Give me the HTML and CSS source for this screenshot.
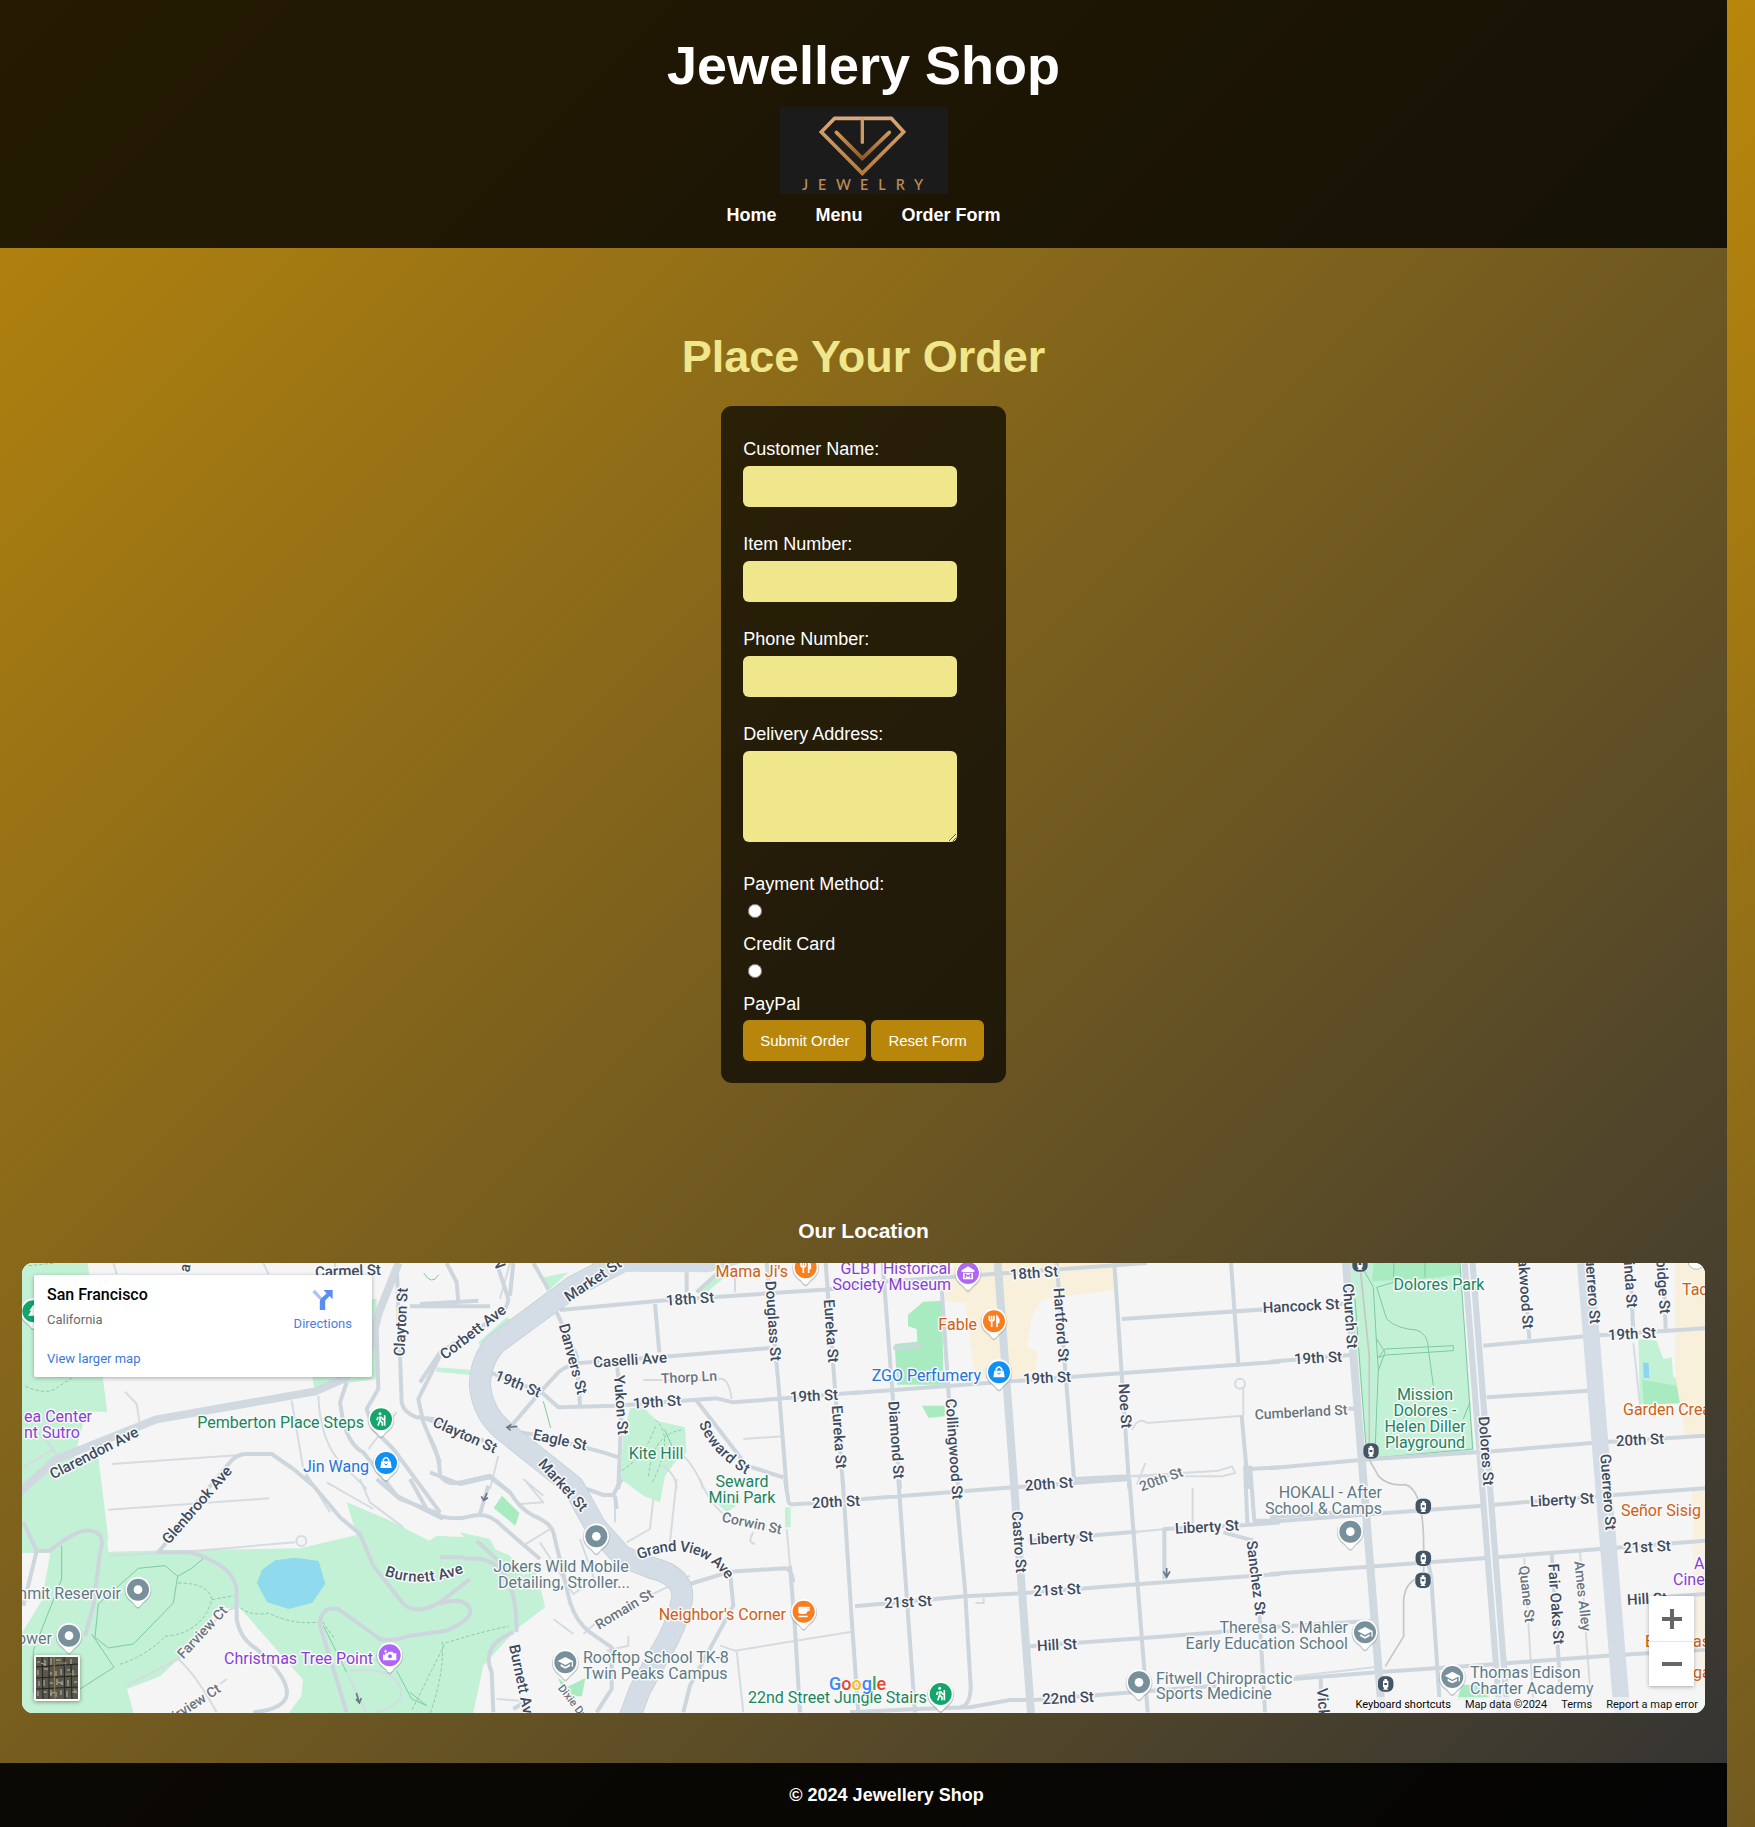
FILE: index.html
```html
<!DOCTYPE html>
<html lang="en">
<head>
<meta charset="utf-8">
<title>Jewellery Shop</title>
<link rel="stylesheet" href="styles.css">
</head>
<body>
<header class="site-header">
  <h1>Jewellery Shop</h1>
  <svg class="logo" viewBox="0 0 504 261" role="img" aria-label="Jewelry logo">
    <defs>
      <linearGradient id="gold" x1="0" y1="0" x2="0" y2="1"><stop offset="0" stop-color="#d9a878"/><stop offset="1" stop-color="#b87a35"/></linearGradient>
      <linearGradient id="gold2" x1="0" y1="0" x2="0" y2="1"><stop offset="0" stop-color="#cf9a58"/><stop offset="1" stop-color="#8a5a2c"/></linearGradient>
    </defs>
    <rect width="504" height="261" fill="#1b1b1b"/>
    <path d="M164 34H334L371 75L247 199L124 75Z" fill="none" stroke="url(#gold)" stroke-width="11"/>
    <path d="M169 76L247 154L328 76" fill="none" stroke="url(#gold2)" stroke-width="11" stroke-linecap="round"/>
    <path d="M242 34H252V108Q247 114 242 108Z" fill="#cf9a60"/>
    <g class="logo-word" fill="#b98a52"><text x="66" y="250">J</text><text x="114" y="250">E</text><text x="168" y="250">W</text><text x="240" y="250">E</text><text x="295" y="250">L</text><text x="347" y="250">R</text><text x="402" y="250">Y</text></g>
  </svg>
  <nav class="nav"><a href="#">Home</a><a href="#">Menu</a><a href="#">Order Form</a></nav>
</header>
<main>
  <section class="order">
    <h2>Place Your Order</h2>
    <form class="card">
      <div class="field"><label for="name">Customer Name:</label><input class="control" type="text" id="name"></div>
      <div class="field"><label for="item">Item Number:</label><input class="control" type="text" id="item"></div>
      <div class="field"><label for="phone">Phone Number:</label><input class="control" type="tel" id="phone"></div>
      <div class="field"><label for="address">Delivery Address:</label><textarea class="control area" id="address"></textarea></div>
      <fieldset class="payment">
        <legend>Payment Method:</legend>
        <input type="radio" name="payment" id="credit"><label for="credit">Credit Card</label>
        <input type="radio" name="payment" id="paypal"><label for="paypal">PayPal</label>
      </fieldset>
      <div class="actions"><button type="submit">Submit Order</button><button type="reset">Reset Form</button></div>
    </form>
  </section>
  <section class="location">
    <h3>Our Location</h3>
    <div class="map">
      <svg class="map-canvas" viewBox="0 0 1683 450" preserveAspectRatio="xMidYMid slice" role="img" aria-label="Map of San Francisco">
        <defs>
          <g id="pin"><path d="M0 54C-5 54 -8 48 -14 41C-22 34 -40 24 -40 -1A40 40 0 1 1 40 -1C40 24 22 34 14 41C8 48 5 54 0 54Z" fill="#8c969c" opacity=".5" transform="translate(0 3)"/><path d="M0 52C-5 52 -8 46 -14 39C-22 32 -38 22 -38 -1A38 38 0 1 1 38 -1C38 22 22 32 14 39C8 46 5 52 0 52Z" fill="#fff"/><circle r="33"/></g>
          <g id="pin-dot"><use href="#pin" fill="#78909c"/><circle r="13" fill="#fff"/></g>
          <g id="pin-hike"><use href="#pin" fill="#12a66a"/><g fill="none" stroke="#fff" stroke-width="5"><path d="M-3 -9V3L-9 19M-3 3L4 10V19M-9 -7L-12 3M0 -7L6 0L10 1M11 -12V19"/><circle cx="-3" cy="-17" r="2"/></g></g>
          <g id="pin-bag"><use href="#pin" fill="#1090f5"/><path d="M-14 -5H14L17 15H-17Z" fill="#fff"/><path d="M-8 -5V-10Q0 -23 8 -10V-5" fill="none" stroke="#fff" stroke-width="5"/><path d="M-5 2Q0 9 5 2" fill="none" stroke="#1090f5" stroke-width="3"/></g>
          <g id="pin-food"><use href="#pin" fill="#fa7d1e"/><path d="M-14 -17V-6Q-14 -1 -7 -1Q0 -1 0 -6V-17M-7 -17V17M9 17V-15Q16 -8 14 3H9" fill="none" stroke="#fff" stroke-width="5"/></g>
          <g id="pin-cup"><use href="#pin" fill="#fa7d1e"/><path d="M-16 -15H18V-2H12Q10 7 4 7H-8Q-16 7 -16 -2ZM-16 12H12V17H-16Z" fill="#fff"/><path d="M12 -10V-6H14V-10Z" fill="#fa7d1e"/></g>
          <g id="pin-museum"><use href="#pin" fill="#b066f5"/><path d="M-19 -8L0 -20L19 -8V-3H-19ZM-15 -1H15V19H-15Z" fill="#fff"/><path d="M-8 15V4L0 10L8 4V15" fill="none" stroke="#b066f5" stroke-width="4"/></g>
          <g id="pin-camera"><use href="#pin" fill="#b066f5"/><path d="M-18 -2H-13V-6H-6L-3 -11H8L11 -6H20V15H-20V-2Z" fill="#fff"/><circle cx="1" cy="3" r="6" fill="#b066f5"/><path d="M-12 -17V-8M-17 -12H-8" stroke="#fff" stroke-width="3"/></g>
          <g id="pin-school"><use href="#pin" fill="#78909c"/><path d="M-23 -4L0 -16L23 -4L0 8ZM-14 5L0 13L14 5V12L0 19L-14 12ZM19 -4H23V13H19Z" fill="#fff"/></g>
          <g id="transit"><circle r="26" fill="#dfe5e9"/><rect x="-23" y="-23" width="46" height="46" rx="17" fill="#435564"/><path d="M-4 -15H4V-10H8V9L4 12L8 17H-8L-4 12L-8 9V-10H-4ZM-4 -3V3H4V-3Z" fill="#fff" fill-rule="evenodd"/></g>
          <path id="grand" d="M615 292Q676 267 709 314"/>
          <path id="burnett" d="M362 307Q400 322 442 304"/>
          <path id="seward" d="M681 157Q692 188 728 208"/>
        </defs>
        <rect width="1683" height="450" fill="#f5f5f5"/>
        <g transform="scale(.333333)">
          <g class="park">
            <g transform="translate(-36 -42)"><path d="M36 42H233L292 488H228L190 640L262 600L295 870L36 1340ZM908 150H1100V390L985 405L915 430L908 390Z"/></g>
            <g transform="translate(-36 648)"><path d="M36 70L130 10L272 0L295 218L560 212L870 208L1040 168L1010 70L1130 120L1258 185L1280 170L1375 175L1500 230L1605 385L1520 450L1420 560L1390 702H36Z"/></g>
            <g transform="translate(1224 -42)"><path d="M340 85L415 70L350 130ZM145 280L230 205L250 215L150 290ZM18 355L120 362V378L20 368ZM800 130L840 85L885 85L820 138ZM600 478L640 475L680 515L765 535L770 610L735 640L705 680L690 760L570 690L580 560Z"/></g>
            <g transform="translate(1224 648)"><path d="M560 -40L690 -20V70L640 50L580 5ZM90 160L180 180L240 300L320 275L345 385L240 350ZM845 60L920 80L890 100ZM1065 85H1082V145H1065Z"/></g>
            <g transform="translate(3744 -42)"><path d="M240 42H570L612 605L290 628ZM1105 270L1160 275L1180 330L1205 325L1210 385L1305 380V450L1110 465Z"/></g>
          </g>
          <g class="lawn">
            <path d="M2704 116L2760 113L2764 320L2774 365L2625 365L2618 243L2686 236L2684 198L2658 190L2658 155L2676 140ZM2700 428L2768 428V460L2720 465Z"/>
            <path d="M4055 0H4312L4315 33L4240 45L4050 55ZM4860 350L5000 375V420L4865 425ZM4320 1265H4400V1305L4305 1310Z"/>
            <path d="M1415 735L1440 698L1492 750L1480 788ZM1608 1245L1640 1270L1690 1245L1680 1300H1630Z"/>
          </g>
          <path d="M2770 50L2800 0H3275V80L3060 110L3030 160L3015 250L3045 265L3040 345L2860 345L2840 200L2830 120L2768 115ZM4960 0H5049V510L4990 515L4960 340ZM5010 680L5049 675V820L5015 825Z" fill="#f9f0dc"/>
          <path d="M5010 820H5049V1270H5030Z" fill="#f9f0dc" opacity=".7"/>
          <path d="M820 884L890 894L910 962L870 1020L800 1038L735 1018L705 960L720 920L760 892Z" fill="#90daee"/>
          <path d="M4863 298L4880 300L4882 345L4865 345Z" fill="#8fd4f2"/>
          <path d="M654 1035L843 1250L838 1300L800 1350H335L315 1278L415 1240L478 1180L570 1060L610 1035Z" fill="#f5f5f5"/>
          <path d="M0 870L85 870L60 1010L0 1110Z" fill="#f5f5f5"/>

          <g class="path">
            <g transform="translate(-36 648)"><path d="M385 268L465 260L503 292L490 372L370 495L295 507L255 475L265 375ZM503 292L545 268L580 238M155 200V300L70 515V640L210 630L312 565L245 465M1010 580L940 440M1160 575L1205 660L1250 680L1200 640"/></g>
            <g transform="translate(3744 -42)"><path d="M270 42L310 115L320 290L325 360L315 610M320 115L370 100L372 42M465 42V85M320 115L350 210Q380 240 440 243Q475 255 475 300L490 410M255 150L290 620M570 42L608 600L300 628M325 325L345 300L550 290V305L350 318ZM320 270L345 310L325 365M600 460L580 510"/></g>
            <path d="M1564 415L1586 495M1928 500L1950 550M1205 30Q1230 70 1250 35"/>
          </g>
          <g class="trail">
            <path d="M20 8L100 0M10 370Q80 400 110 370L150 345M468 960Q560 960 570 1010Q540 1110 430 1120Q370 1180 290 1205M570 1010L635 998M655 1035Q690 1060 740 1050Q820 1090 900 1075L940 1130M1800 622Q1870 580 1900 490M1880 640Q1890 510 1985 500M1900 470Q1960 520 1890 660M1170 1340L1270 1140Q1400 1100 1460 1090M1225 1350Q1270 1220 1260 1130"/>
          </g>

          <g class="road minor">
            <g transform="translate(-36 -42)"><path d="M305 645L690 618M345 428L380 465L390 530M310 42L320 75M760 42L775 75M975 42V75M845 455L880 660L960 790M925 440Q930 580 1000 650L1070 720M1160 490L1075 600M40 655L130 600M100 560L145 625"/></g>
            <g transform="translate(-36 648)"><path d="M295 92L778 58M300 230L560 215L855 190M505 540Q560 590 620 700M1050 0L1080 70L1180 145M950 10L1090 90M350 620L505 540L640 400L675 385M630 615L650 600M1015 590L1070 700M1020 575Q1160 560 1175 640Q1170 680 1100 700"/><circle cx="874" cy="186" r="15"/></g>
            <g transform="translate(1224 -42)"><path d="M640 393H860Q895 375 905 450M940 570L1060 562M490 42V120M560 42V60M280 690L340 740M760 620Q800 660 820 720M700 650Q740 680 740 720M205 620L180 720M915 80V130M210 150L240 42"/></g>
            <g transform="translate(1224 648)"><path d="M740 0L720 190M590 190L660 150L670 60M555 60V130M270 75L340 70L290 10M810 0Q840 80 900 120M970 160Q950 190 975 195M1070 150L1080 260M430 465L370 420M460 465L500 430M660 350L780 290M595 470V500L530 515M920 515L940 700M870 500L915 515L1265 458M200 660L270 665M450 180L500 320M330 240L280 200L360 150M330 190L430 345L480 310"/></g>
            <path d="M3374 480L3664 458M3664 458V370M3330 500Q3350 460 3374 480M3320 640L3590 623L3630 610L3640 630L3600 640ZM3512 675V785M3345 665L3370 600M2860 1020H2885V1005M3434 798L3345 806M4834 240L4854 425"/>
            <circle cx="3654" cy="362" r="15"/>
            <path d="M4507 885L4534 1320M4674 865L4708 1330M4580 1310L4586 1345M3820 1240L4080 1210"/>
          </g>

          <g class="road">
            <g transform="translate(-36 -42)"><path d="M1160 42L1175 460Q1180 490 1220 505L1290 512M1200 172H1440M1100 240L1105 420L1070 480L1090 540L1150 600L1290 790M1290 320L1225 450L1240 520L1290 640M560 760L660 640Q680 615 710 615H785L850 660L910 710M1010 400L990 460L1000 520Q1020 590 1060 610L1160 740L1300 810"/></g>
            <g transform="translate(-36 648)"><path d="M440 225L520 130M440 220H540Q680 260 680 340V420Q690 480 740 510Q840 600 830 650Q820 690 730 700M885 -10L990 115L1050 165L1090 260L1180 375Q1220 410 1290 370L1380 300M1100 0L1170 60L1290 105M1200 0L1250 90M40 130L80 215L120 215Q200 150 240 155Q290 160 270 220L250 380L225 470M80 215L40 380M1010 700L930 440Q930 380 985 390L1110 480Q1140 490 1200 470L1310 455Q1390 420 1380 390Q1360 350 1290 375"/></g>
            <g transform="translate(1224 -42)"><path d="M50 42L80 100L85 160L-30 170M-30 165L145 155M200 42L235 150Q230 190 190 210L30 310L-30 400M250 42L240 140M310 42L355 120M390 183L690 155L1290 115M675 165L688 310M770 70V130M800 130L860 75M380 190L440 320L450 470M240 535L330 430L385 370Q420 340 480 340L720 322L1020 297M180 370L335 430L385 475L560 470L860 448L910 460L1290 430M560 340L575 470L565 720M1010 42L1045 400L1070 720M1187 42L1215 420L1240 720M800 455L850 520L950 650L1060 685M270 550L330 560L520 610L565 625M-10 510L200 590M0 565Q30 620 30 680Q50 710 90 700L180 680L240 730"/></g>
            <g transform="translate(1224 648)"><path d="M1065 0L1075 65Q1078 78 1090 76L1290 65M1238 0L1265 420L1285 700M1080 260L1095 450L1110 700M780 315L900 278L1065 268Q1085 270 1090 310M900 280L910 380L780 620L760 700M0 100Q60 130 130 110Q180 100 220 145L330 240M0 -20L90 15L180 -5L240 40Q270 90 310 110Q360 130 370 160L420 370Q440 430 480 460L545 505V630L500 700M150 105L175 20M470 30L520 48H550L575 0M555 50L560 90M100 240Q170 230 210 270Q260 320 260 460M250 460Q150 500 185 580L190 700M250 690L300 660M30 235H100M140 185L210 250"/></g>
            <g transform="translate(2484 -42)"><path d="M98 42L125 400L150 720M130 297L215 290M270 42L297 450L325 720M620 42L672 690L835 682M793 42L838 720M1143 42L1165 345M1175 500L1195 720M0 105L640 60L890 42M815 210L1290 178M0 433L820 372L1290 338M1195 660L1290 655"/></g>
            <g transform="translate(2484 648)"><path d="M145 0L195 700M320 60L345 330L362 620Q362 680 330 685M838 0L893 700M1185 -40L1192 132M1200 -40L1213 125H1290M1228 400L1245 700M0 63L490 25L840 0M535 185L860 158M943 300V150L1190 138L1290 130M1120 160L1210 185M15 382L345 352L525 342L870 315L1290 285M540 502L880 477L1230 450M0 700L200 690L360 685L480 663L560 662L1100 620"/></g>
            <g transform="translate(3744 -42)"><path d="M0 338L240 318M640 290L945 262L1305 238M650 445L955 425M650 608L965 582L1305 560M0 658L280 632L640 608M760 42L778 270M1080 42L1090 250M1180 42L1187 240M200 165H230M220 478L260 480"/></g>
            <g transform="translate(3744 648)"><path d="M0 128L640 80L1000 50L1305 28M0 115L280 95M0 285L640 238L990 210L1305 185M0 445L305 425M1070 363L1305 345M70 600L340 578L640 558L1010 530L1305 512M475 250L484 300L508 655M845 220L872 640M152 600L155 700"/></g>
          </g>

          <g class="edge"><path d="M1840 -25L1654 70L1424 240Q1374 290 1374 370Q1384 460 1454 510L1554 590L1654 670L1720 790L1800 880L1890 915Q1990 940 1980 1010Q1965 1090 1915 1170L1854 1280L1820 1370"/></g>
          <g class="major"><path d="M1840 -25L1654 70L1424 240Q1374 290 1374 370Q1384 460 1454 510L1554 590L1654 670L1720 790L1800 880L1890 915Q1990 940 1980 1010Q1965 1090 1915 1170L1854 1280L1820 1370"/></g>
          <path d="M1740 0H2160L2060 28L1800 26Z" fill="#d4dde5"/>
          <g class="road arterial">
            <path d="M-10 690L100 590L400 470L880 385L970 345L1040 270L1070 150L1130 0"/>
            <path d="M2927 0L3027 1350M3972 0L4080 1350"/>
            <path d="M4340 0L4445 1350" class="divided"/>
            <path d="M4690 0L4800 1350" class="wide"/>
          </g>
          <path d="M4340 0L4445 1350" stroke="#f3f6f8" stroke-width="5" fill="none"/>
          <path d="M4015 20L4042 280V590L4070 640Q4100 670 4150 665Q4205 680 4205 850V940Q4150 950 4145 1010V1120L4090 1210" fill="none" stroke="#c6c6c6" stroke-width="5"/>
          <path d="M1486 490L1455 493M1468 484L1455 493L1466 502M1395 690L1385 712M1378 700L1385 712L1398 704M3434 915V940M3424 925L3434 942L3444 925M1003 1290L1012 1320M1002 1308L1012 1320L1018 1305" stroke="#667888" stroke-width="5" fill="none"/>
        </g>

        <g class="label">
          <text transform="translate(326 8) rotate(-2)">Carmel St</text>
          <text transform="translate(163 5) rotate(-80)">a</text>
          <text transform="translate(477 0) rotate(70)">N</text>
          <text transform="translate(379 59) rotate(-87)">Clayton St</text>
          <text transform="translate(72 190) rotate(-27)">Clarendon Ave</text>
          <text transform="translate(175 242) rotate(-49)">Glenbrook Ave</text>
          <text><textPath href="#burnett" startOffset="50%">Burnett Ave</textPath></text>
          <text transform="translate(571 17) rotate(-34)">Market St</text>
          <text transform="translate(451 69) rotate(-38)">Corbett Ave</text>
          <text transform="translate(551 96) rotate(75)">Danvers St</text>
          <text transform="translate(608 97) rotate(-4)">Caselli Ave</text>
          <text transform="translate(496 121) rotate(22)">19th St</text>
          <text transform="translate(635 139) rotate(-4)">19th St</text>
          <text transform="translate(792 133) rotate(-3)">19th St</text>
          <text transform="translate(668 36) rotate(-4)">18th St</text>
          <text transform="translate(751 58) rotate(86)">Douglass St</text>
          <text transform="translate(809 68) rotate(86)">Eureka St</text>
          <text transform="translate(817 174) rotate(86)">Eureka St</text>
          <text transform="translate(599 142) rotate(86)">Yukon St</text>
          <text><textPath href="#seward" startOffset="50%">Seward St</textPath></text>
          <text transform="translate(538 177) rotate(12)">Eagle St</text>
          <text transform="translate(443 172) rotate(24)">Clayton St</text>
          <text transform="translate(541 222) rotate(48)">Market St</text>
          <text><textPath href="#grand" startOffset="50%">Grand View Ave</textPath></text>
          <text transform="translate(814 239) rotate(-3)">20th St</text>
          <text transform="translate(500 420) rotate(78)">Burnett Ave</text>
          <text transform="translate(1012 10) rotate(-4)">18th St</text>
          <text transform="translate(1039 62) rotate(86)">Hartford St</text>
          <text transform="translate(1025 115) rotate(-3)">19th St</text>
          <text transform="translate(1103 143) rotate(86)">Noe St</text>
          <text transform="translate(874 177) rotate(86)">Diamond St</text>
          <text transform="translate(932 186) rotate(86)">Collingwood St</text>
          <text transform="translate(1027 221) rotate(-4)">20th St</text>
          <text transform="translate(1279 43) rotate(-3)">Hancock St</text>
          <text transform="translate(1328 53) rotate(86)">Church St</text>
          <text transform="translate(1296 95) rotate(-3)">19th St</text>
          <text transform="translate(1506 66) rotate(86)" class="end">Oakwood St</text>
          <text transform="translate(1573 61) rotate(86)" class="end">Guerrero St</text>
          <text transform="translate(1610 45) rotate(86)" class="end">Linda St</text>
          <text transform="translate(1643 51) rotate(86)" class="end">Lapidge St</text>
          <text transform="translate(1610 71) rotate(-3)">19th St</text>
          <text transform="translate(1618 177) rotate(-3)">20th St</text>
          <text transform="translate(1464 188) rotate(86)">Dolores St</text>
          <text transform="translate(1586 229) rotate(86)">Guerrero St</text>
          <text transform="translate(1534 341) rotate(86)">Fair Oaks St</text>
          <text transform="translate(1540 237) rotate(-3)">Liberty St</text>
          <text transform="translate(1625 284) rotate(-3)">21st St</text>
          <text transform="translate(1625 336) rotate(-3)">Hill St</text>
          <text transform="translate(1300 425) rotate(86)" class="start">Vicksburg St</text>
          <text transform="translate(997 279) rotate(86)">Castro St</text>
          <text transform="translate(1039 275) rotate(-3)">Liberty St</text>
          <text transform="translate(1185 264) rotate(-3)">Liberty St</text>
          <text transform="translate(886 339) rotate(-3)">21st St</text>
          <text transform="translate(1035 327) rotate(-3)">21st St</text>
          <text transform="translate(1035 382) rotate(-3)">Hill St</text>
          <text transform="translate(1046 435) rotate(-3)">22nd St</text>
          <text transform="translate(1234 315) rotate(83)">Sanchez St</text>
          <g class="lane">
            <text transform="translate(180 369) rotate(-47)">Farview Ct</text>
            <text transform="translate(197 424) rotate(-33)" class="end">Fairview Ct</text>
            <text transform="translate(667 114) rotate(-3)">Thorp Ln</text>
            <text transform="translate(730 260) rotate(12)">Corwin St</text>
            <text transform="translate(602 346) rotate(-31)">Romain St</text>
            <text transform="translate(550 438) rotate(52)" class="tiny">Dixie Dr</text>
            <text transform="translate(1139 216) rotate(-20)">20th St</text>
            <text transform="translate(1279 149) rotate(-3)">Cumberland St</text>
            <text transform="translate(1505 331) rotate(84)">Quane St</text>
            <text transform="translate(1561 333) rotate(84)">Ames Alley</text>
          </g>
        </g>
        <g class="poi">
          <g fill="#8a3fd4"><text x="2" y="153">ea Center</text><text x="2" y="169">nt Sutro</text><text class="end" x="929" y="5">GLBT Historical</text><text class="end" x="929" y="21">Society Museum</text><text class="end" x="351" y="395">Christmas Tree Point</text><text x="1672" y="300">A</text><text x="1651" y="316">Cine</text></g>
          <g fill="#1b855c"><text class="end" x="342" y="159">Pemberton Place Steps</text><text class="mid" x="634" y="190">Kite Hill</text><text class="mid" x="720" y="218">Seward</text><text class="mid" x="720" y="234">Mini Park</text><text x="726" y="434">22nd Street Jungle Stairs</text><text class="mid" x="1417" y="21">Dolores Park</text><text class="mid" x="1403" y="131">Mission</text><text class="mid" x="1403" y="147">Dolores -</text><text class="mid" x="1403" y="163">Helen Diller</text><text class="mid" x="1403" y="179">Playground</text></g>
          <g fill="#2673d9"><text class="end" x="347" y="203">Jin Wang</text><text class="end" x="959" y="112">ZGO Perfumery</text></g>
          <g fill="#d0600f"><text class="end" x="766" y="8">Mama Ji's</text><text class="end" x="955" y="61">Fable</text><text class="end" x="764" y="351">Neighbor's Corner</text><text x="1660" y="26">Taco</text><text x="1601" y="146">Garden Crea</text><text x="1599" y="247">Señor Sisig</text><text x="1623" y="378">B</text><text x="1671" y="378">as</text><text x="1671" y="409">ga</text></g>
          <g fill="#5f7a84"><text class="end" x="99" y="330">Summit Reservoir</text><text class="end" x="30" y="375">Tower</text><text class="mid" x="539" y="303">Jokers Wild Mobile</text><text class="mid" x="542" y="319">Detailing, Stroller...</text><text x="561" y="394">Rooftop School TK-8</text><text x="561" y="410">Twin Peaks Campus</text><text x="1134" y="415">Fitwell Chiropractic</text><text x="1134" y="430">Sports Medicine</text><text class="end" x="1326" y="364">Theresa S. Mahler</text><text class="end" x="1326" y="380">Early Education School</text><text class="end" x="1360" y="229">HOKALI - After</text><text class="end" x="1360" y="245">School &amp; Camps</text><text x="1448" y="409">Thomas Edison</text><text x="1448" y="425">Charter Academy</text></g>
          <text class="google" x="807" y="420"><tspan fill="#4285f4">G</tspan><tspan fill="#ea4335">o</tspan><tspan fill="#fbbc05">o</tspan><tspan fill="#4285f4">g</tspan><tspan fill="#34a853">l</tspan><tspan fill="#ea4335">e</tspan></text>
        </g>
        <g transform="scale(.333333)">
          <use href="#pin" x="34" y="145" fill="#12a66a"/><path d="M34 125L46 143H40L50 158H18L28 143H22Z" fill="#fff"/>
          <use href="#pin-hike" x="1077" y="469"/><use href="#pin-hike" x="2756" y="1293"/>
          <use href="#pin-bag" x="1092" y="600"/><use href="#pin-bag" x="2931" y="328"/>
          <use href="#pin-food" x="2351" y="13"/><use href="#pin-food" x="2916" y="175"/>
          <use href="#pin-cup" x="2345" y="1046"/><use href="#pin-museum" x="2838" y="30"/>
          <use href="#pin-camera" x="1103" y="1177"/>
          <use href="#pin-school" x="1630" y="1198"/><use href="#pin-school" x="4029" y="1108"/><use href="#pin-school" x="4291" y="1242"/>
          <use href="#pin-dot" x="348" y="980"/><use href="#pin-dot" x="141" y="1118"/><use href="#pin-dot" x="1723" y="820"/><use href="#pin-dot" x="3351" y="1258"/><use href="#pin-dot" x="3985" y="806"/>
          <use href="#transit" x="4014" y="3"/><use href="#transit" x="4047" y="564"/><use href="#transit" x="4204" y="730"/><use href="#transit" x="4204" y="886"/><use href="#transit" x="4203" y="952"/><use href="#transit" x="4091" y="1263"/>
          <circle cx="5023" cy="-6" r="25" fill="#fff" stroke="#bbb" stroke-width="3"/>
        </g>
      </svg>
      <div class="place">
        <div class="place-text"><strong>San Francisco</strong><span>California</span><a href="#">View larger map</a></div>
        <a class="directions" href="#"><svg viewBox="0 0 60 62" aria-hidden="true"><path d="M0 9L8 2L30 27V40Z" fill="#a9c3f8"/><path d="M22 62V38Q22 31 28 26L42 13L33 3H60V30L51 21L38 34V62Z" fill="#5a8def"/></svg>Directions</a>
      </div>
      <button class="satellite" type="button" aria-label="Show satellite imagery"><svg viewBox="0 0 42 42" aria-hidden="true"><rect width="42" height="42" fill="#5a574c"/><path d="M1 5H4M9 3V9M15 1V8M20 3H25M29 5V9M35 2V8M2 13V18M8 12H12M15 15V18M20 14V19M25 12V18M31 13H34M37 13V19M3 24V29M8 23V29M13 26H17M21 22V28M26 24V28M32 23V29M38 25H41M2 34V39M7 35H11M15 33V39M20 35V40M25 33V38M31 34V40M36 35H40" stroke="#8a897f" stroke-width="2"/><path d="M0 10L42 7M0 21L42 19M0 32L42 30M6 0L7 42M13 0L13 42M28 0L29 42M35 8L36 42" stroke="#25251f" stroke-width="1"/><path d="M18 0L19 42M20 6H31M29 17H40" stroke="#92854c" stroke-width="1"/><path d="M5 6L10 8M22 25L27 27M14 37L19 35M38 32L41 36" stroke="#b2aea2" stroke-width="1"/></svg></button>
      <div class="zoom-controls"><button type="button" aria-label="Zoom in"><svg viewBox="0 0 20 20" aria-hidden="true"><path d="M8 0H12V8H20V12H12V20H8V12H0V8H8Z"/></svg></button><button type="button" aria-label="Zoom out"><svg viewBox="0 0 20 20" aria-hidden="true"><path d="M0 8H20V12H0Z"/></svg></button></div>
      <div class="attribution"><button type="button">Keyboard shortcuts</button><span>Map data ©2024</span><a href="#">Terms</a><a href="#">Report a map error</a></div>
    </div>
  </section>
</main>
<footer class="site-footer"><p>© 2024 Jewellery Shop</p></footer>
</body>
</html>
```
FILE: styles.css
```css
* { box-sizing: border-box; }

/* The gradient tiles at the page's own width; the gutter shows the next tile. */
html { margin-right: 28px; }

body {
  margin: 0;
  color: #fff;
  font: 18px/22px "Liberation Sans", Arial, sans-serif;
  background: linear-gradient(135deg, #b8860b, #333);
}

h1, h2, h3, p { margin: 0; }
a { color: inherit; text-decoration: none; }
button { font: inherit; border: 0; cursor: pointer; }

.site-header {
  display: flex;
  flex-direction: column;
  align-items: center;
  padding: 34px 22px 22px;
  background: rgba(0, 0, 0, .8);
}
h1 { font-size: 54px; line-height: 62px; }
.logo { width: 168px; height: 87px; margin: 11px 0 10px; }
.logo-word { font: 600 43px Lato, sans-serif; }
.nav { display: flex; gap: 39px; font-weight: bold; }

.order {
  display: flex;
  flex-direction: column;
  align-items: center;
  gap: 23px;
  padding: 83px 22px 136px;
}
h2 { color: #f0e68c; font-size: 45px; line-height: 52px; }

.card {
  padding: 32px 22px 22px;
  border-radius: 11px;
  background: rgba(0, 0, 0, .7);
}
.field { margin-bottom: 26px; }
.field label, .payment label { display: block; }
.control {
  display: block;
  width: 214px;
  height: 41px;
  margin-top: 6px;
  padding: 11px;
  border: 0;
  border-radius: 6px;
  background: #f0e68c;
  font: inherit;
}
.area { height: 91px; margin-bottom: 31px; }
.payment { margin: 0; padding: 0; border: 0; }
.payment legend { padding: 0; }
.payment input { display: block; width: 14px; height: 14px; margin: 9px 5px 15px; }
.actions { display: flex; gap: 5px; margin-top: 5px; }
.actions button {
  height: 41px;
  padding: 0 17px;
  border-radius: 6px;
  color: #fff;
  background: #b8860b;
  font-size: 15px;
}

.location { padding: 0 22px 50px; }
h3 { margin-bottom: 20px; font-size: 21px; line-height: 24px; text-align: center; }

.map {
  position: relative;
  height: 450px;
  overflow: hidden;
  border-radius: 11px;
  background: #f5f5f5;
  color: #111;
  font: 13px/16px Roboto, sans-serif;
}
.map-canvas { display: block; width: 100%; height: 100%; }
.park { fill: #c3f1d5; }
.lawn { fill: #a8ebc1; }
.path { fill: none; stroke: #7cc9a5; stroke-width: 3; }
.trail { fill: none; stroke: #8bc9a9; stroke-width: 3; stroke-dasharray: 10 6; }
.road { fill: none; stroke: #cdd6dd; stroke-width: 12; stroke-linejoin: round; }
.road.minor { stroke: #d5dce1; stroke-width: 6; }
.road.arterial { stroke: #d0d9e0; stroke-width: 24; }
.divided { stroke-width: 42; }
.wide { stroke: #d4dde5; stroke-width: 50; }
.edge { fill: none; stroke: #c3ccd4; stroke-width: 66; }
.major { fill: none; stroke: #d4dde5; stroke-width: 62; }

.map-canvas text {
  dominant-baseline: central;
  paint-order: stroke;
  stroke: #f8f9fa;
  stroke-width: 3px;
  stroke-linejoin: round;
}
.label { fill: #3f4b5e; font-size: 15px; font-weight: 500; text-anchor: middle; }
.lane { fill: #6c747d; font-size: 14px; }
.tiny { font-size: 11px; }
.poi { font-size: 16px; }
.mid { text-anchor: middle; }
.start { text-anchor: start; }
.end { text-anchor: end; }
.map-canvas .google { font-size: 18px; font-weight: 500; stroke-width: 2px; }

.place {
  position: absolute;
  top: 12px;
  left: 12px;
  display: flex;
  justify-content: space-between;
  width: 338px;
  height: 102px;
  padding: 12px 20px 10px 13px;
  border-radius: 2px;
  background: #fff;
  box-shadow: 0 1px 4px rgba(0, 0, 0, .3);
}
.place-text { display: flex; flex-direction: column; }
.place-text strong { color: #000; font-size: 16px; font-weight: 500; }
.place-text span { margin-top: 9px; color: #6b6b6b; }
.place-text a { margin-top: 23px; color: #3b78d8; }
.directions { display: flex; flex-direction: column; align-items: center; gap: 6px; padding-top: 2px; color: #4a7fdc; }
.directions svg { width: 21px; height: 21px; }

.satellite {
  position: absolute;
  left: 12px;
  bottom: 12px;
  width: 46px;
  height: 46px;
  padding: 2px;
  border-radius: 2px;
  background: #fff;
  box-shadow: 0 1px 4px rgba(0, 0, 0, .4);
}
.satellite svg { display: block; width: 42px; height: 42px; }

.zoom-controls {
  position: absolute;
  right: 11px;
  bottom: 27px;
  width: 45px;
  background: #fff;
  box-shadow: 0 1px 4px rgba(0, 0, 0, .3);
}
.zoom-controls button { display: grid; place-items: center; width: 45px; height: 45px; padding: 0; background: none; }
.zoom-controls button + button { border-top: 1px solid #e6e6e6; }
.zoom-controls svg { width: 20px; height: 20px; fill: #666; }

.attribution {
  position: absolute;
  right: 0;
  bottom: 0;
  display: flex;
  gap: 14px;
  padding: 0 7px;
  background: rgba(245, 245, 245, .7);
  font-size: 11px;
}
.attribution button { padding: 0; background: none; }

.site-footer {
  margin-right: -28px;
  padding: 21px 22px 21px 40px;
  background: rgba(0, 0, 0, .9);
  font-weight: bold;
  text-align: center;
}
```
